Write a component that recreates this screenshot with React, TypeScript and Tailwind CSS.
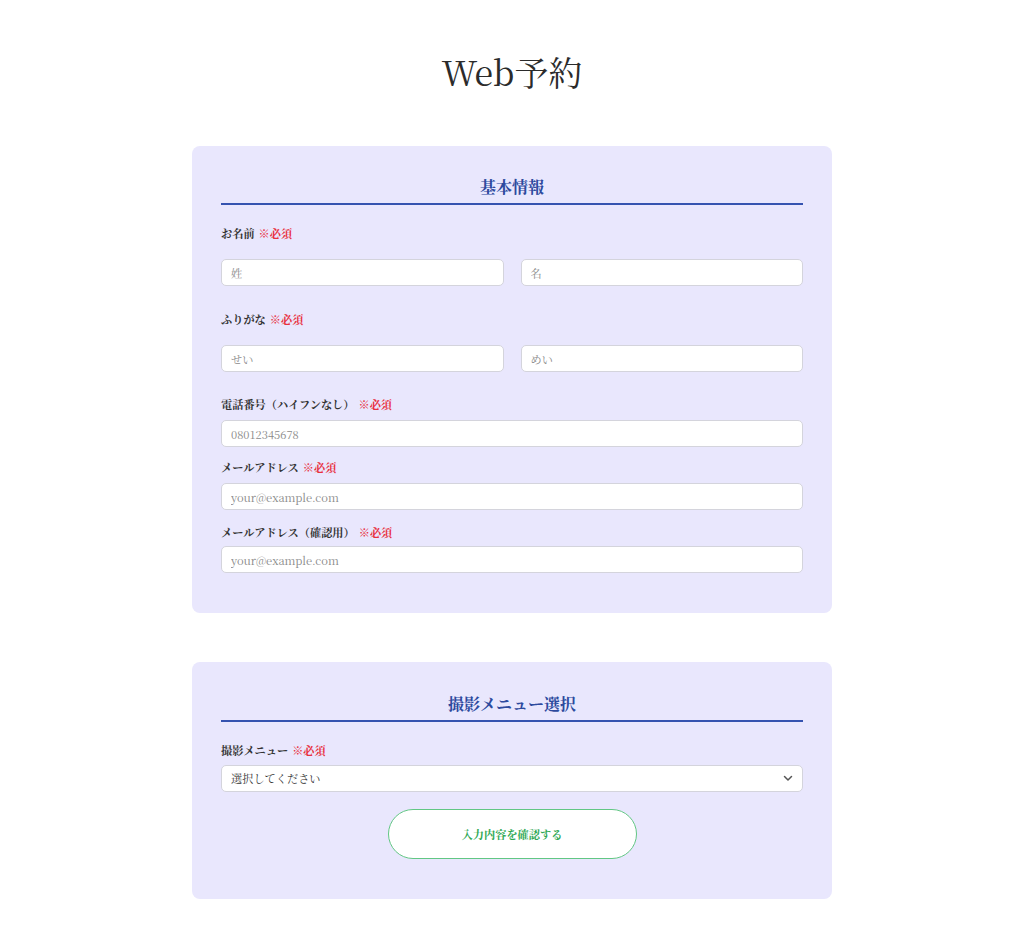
import React from "react";

const serif = { fontFamily: '"Noto Serif CJK JP", "Liberation Serif", "Noto Sans CJK JP", serif' };

function Required() {
  return <span className="ml-[4px] text-[#e8313f]">※必須</span>;
}

function Label({ children, className = "" }: { children: React.ReactNode; className?: string }) {
  return (
    <div className={`text-[11.2px] leading-[18px] font-bold text-[#333] ${className}`}>
      {children}
      <Required />
    </div>
  );
}

function Input({ placeholder, className = "" }: { placeholder: string; className?: string }) {
  return (
    <input
      type="text"
      placeholder={placeholder}
      className={`w-full h-[27px] rounded-[5px] border border-[#d4d4dc] bg-white px-[9px] text-[11.2px] text-[#333] placeholder:text-[#8a8a8a] outline-none ${className}`}
      style={serif}
    />
  );
}

function SectionTitle({ children }: { children: React.ReactNode }) {
  return (
    <h2 className="text-center text-[16px] leading-[24px] font-bold text-[#2d4a9e] pb-1 border-b-2 border-[#3553b0]">
      {children}
    </h2>
  );
}

export default function App() {
  return (
    <div className="min-h-[952px] bg-white pt-[52px] pb-[52px]" style={serif}>
      <h1 className="text-center text-[34px] leading-[40px] text-[#2b2b2b] mb-[54px]">Web予約</h1>

      <div className="w-[640px] mx-auto bg-[#e9e7fd] rounded-[8px] px-[29px] pt-[29px] pb-[40px]">
        <SectionTitle>基本情報</SectionTitle>

        <Label className="mt-[19px]">お名前</Label>
        <div className="grid grid-cols-2 gap-[17px] mt-[17px]">
          <Input placeholder="姓" />
          <Input placeholder="名" />
        </div>

        <Label className="mt-[24px]">ふりがな</Label>
        <div className="grid grid-cols-2 gap-[17px] mt-[17px]">
          <Input placeholder="せい" />
          <Input placeholder="めい" />
        </div>

        <Label className="mt-[23px]">電話番号（ハイフンなし）</Label>
        <Input placeholder="08012345678" className="mt-[7px]" />

        <Label className="mt-[11px]">メールアドレス</Label>
        <Input placeholder="your@example.com" className="mt-[7px]" />

        <Label className="mt-[13px]">メールアドレス（確認用）</Label>
        <Input placeholder="your@example.com" className="mt-[5px]" />
      </div>

      <div className="w-[640px] mx-auto mt-[49px] bg-[#e9e7fd] rounded-[8px] px-[29px] pt-[30px] pb-[40px]">
        <SectionTitle>撮影メニュー選択</SectionTitle>

        <Label className="mt-[19px]">撮影メニュー</Label>
        <div className="relative mt-[6px]">
          <select
            className="w-full h-[27px] appearance-none rounded-[5px] border border-[#d4d4dc] bg-white px-[9px] text-[11.2px] text-[#333] outline-none"
            style={serif}
            defaultValue=""
          >
            <option value="">選択してください</option>
          </select>
          <svg
            className="pointer-events-none absolute right-[10px] top-[10px]"
            width="10"
            height="7"
            viewBox="0 0 10 7"
            fill="none"
          >
            <path d="M1.5 1.5 L5 5 L8.5 1.5" stroke="#555" strokeWidth="1.5" strokeLinecap="round" strokeLinejoin="round" />
          </svg>
        </div>

        <div className="flex justify-center mt-[17px]">
          <button
            type="button"
            className="w-[249px] h-[50px] rounded-[25px] border border-[#62c784] bg-white text-[11.2px] font-bold text-[#2ea853]"
            style={serif}
          >
            入力内容を確認する
          </button>
        </div>
      </div>
    </div>
  );
}
